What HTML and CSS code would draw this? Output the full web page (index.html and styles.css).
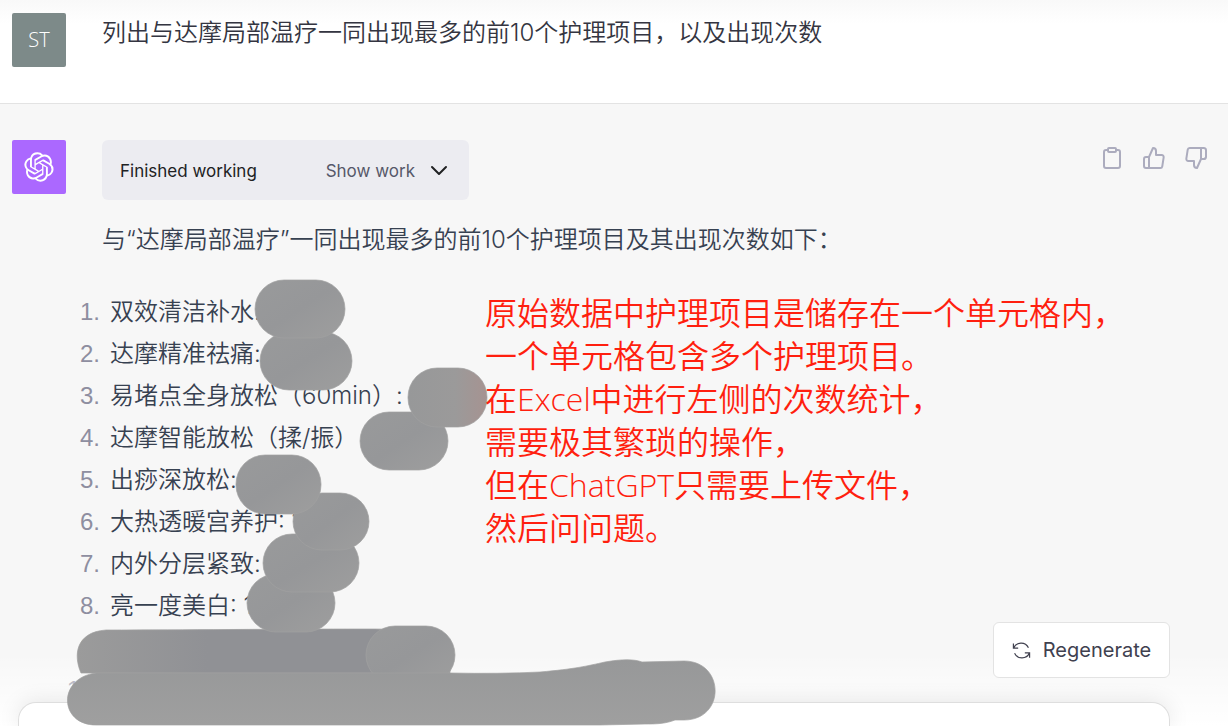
FILE: index.html
```
<!DOCTYPE html>
<html lang="zh-CN">

<head>
    <meta charset="UTF-8">
    <meta name="viewport" content="width=device-width, initial-scale=1.0">
    <title>ChatGPT</title>

    <link rel="stylesheet" href="styles.css">
</head>

<body>
    <main class="chat">
        <section class="turn turn-user">
            <div class="avatar avatar-user">ST</div>
            <p class="text question">列出与达摩局部温疗一同出现最多的前10个护理项目，以及出现次数</p>
        </section>

        <section class="turn turn-bot">
            <div class="avatar avatar-bot">
                <svg class="logo" viewBox="0 0 41 41" fill="currentColor" aria-label="ChatGPT">
                    <path d="M37.532 16.87a9.963 9.963 0 0 0-.856-8.184 10.078 10.078 0 0 0-10.855-4.835A9.964 9.964 0 0 0 18.306.5a10.079 10.079 0 0 0-9.614 6.977 9.967 9.967 0 0 0-6.664 4.834 10.08 10.08 0 0 0 1.24 11.817 9.965 9.965 0 0 0 .856 8.185 10.079 10.079 0 0 0 10.855 4.835 9.965 9.965 0 0 0 7.516 3.35 10.078 10.078 0 0 0 9.617-6.981 9.967 9.967 0 0 0 6.663-4.834 10.079 10.079 0 0 0-1.243-11.813ZM22.498 37.886a7.474 7.474 0 0 1-4.799-1.735c.061-.033.168-.091.237-.134l7.964-4.6a1.294 1.294 0 0 0 .655-1.134V19.054l3.366 1.944a.12.12 0 0 1 .066.092v9.299a7.505 7.505 0 0 1-7.49 7.496ZM6.392 31.006a7.471 7.471 0 0 1-.894-5.023c.06.036.162.099.237.141l7.964 4.6a1.297 1.297 0 0 0 1.308 0l9.724-5.614v3.888a.12.12 0 0 1-.048.103l-8.051 4.649a7.504 7.504 0 0 1-10.24-2.744ZM4.297 13.62A7.469 7.469 0 0 1 8.2 10.333c0 .068-.004.19-.004.274v9.201a1.294 1.294 0 0 0 .654 1.132l9.723 5.614-3.366 1.944a.12.12 0 0 1-.114.01L7.04 23.856a7.504 7.504 0 0 1-2.743-10.237Zm27.658 6.437-9.724-5.615 3.367-1.943a.121.121 0 0 1 .113-.01l8.052 4.648a7.498 7.498 0 0 1-1.158 13.528v-9.476a1.293 1.293 0 0 0-.65-1.132Zm3.35-5.043c-.059-.037-.162-.099-.236-.141l-7.965-4.6a1.298 1.298 0 0 0-1.308 0l-9.723 5.614v-3.888a.12.12 0 0 1 .048-.103l8.05-4.645a7.497 7.497 0 0 1 11.135 7.763Zm-21.063 6.929-3.367-1.944a.12.12 0 0 1-.065-.092v-9.299a7.497 7.497 0 0 1 12.293-5.756 6.94 6.94 0 0 0-.236.134l-7.965 4.6a1.294 1.294 0 0 0-.654 1.132l-.006 11.225Zm1.829-3.943 4.33-2.501 4.332 2.5v5l-4.331 2.5-4.331-2.5V18Z"/>
                </svg>
            </div>

            <div class="answer">
                <div class="answer-top">
                    <div class="work">
                        <span class="work-status">Finished working</span>
                        <button class="work-toggle" type="button">
                            Show work
                            <svg class="chevron" viewBox="0 0 24 24"><path d="M5 8l7 7 7-7"/></svg>
                        </button>
                    </div>
                    <div class="actions">
                        <button class="action" type="button" aria-label="Copy">
                            <svg viewBox="0 0 24 24"><path d="M16 4h2a2 2 0 0 1 2 2v14a2 2 0 0 1-2 2H6a2 2 0 0 1-2-2V6a2 2 0 0 1 2-2h2"/><rect x="8" y="2" width="8" height="4" rx="1"/></svg>
                        </button>
                        <button class="action" type="button" aria-label="Good response">
                            <svg viewBox="0 0 24 24"><path d="M14 9V5a3 3 0 0 0-3-3l-4 9v11h11.280a2 2 0 0 0 2-1.700l1.380-9a2 2 0 0 0-2-2.300zM7 22H4a2 2 0 0 1-2-2v-7a2 2 0 0 1 2-2h3"/></svg>
                        </button>
                        <button class="action" type="button" aria-label="Bad response">
                            <svg viewBox="0 0 24 24"><path d="M10 15v4a3 3 0 0 0 3 3l4-9V2H5.720a2 2 0 0 0-2 1.700l-1.380 9a2 2 0 0 0 2 2.300zm7-13h2.670A2.310 2.310 0 0 1 22 4v7a2.310 2.310 0 0 1-2.330 2H17"/></svg>
                        </button>
                    </div>
                </div>

                <p class="text">与“达摩局部温疗”一同出现最多的前10个护理项目及其出现次数如下：</p>

                <ol class="items">
                    <li>双效清洁补水:</li>
                    <li>达摩精准祛痛:</li>
                    <li>易堵点全身放松（60min）:</li>
                    <li>达摩智能放松（揉/振）</li>
                    <li>出痧深放松:</li>
                    <li>大热透暖宫养护: 1</li>
                    <li>内外分层紧致:</li>
                    <li>亮一度美白: 1</li>
                    <li></li>
                    <li></li>
                </ol>
            </div>
        </section>

        <footer class="bottom">
            <button class="regenerate" type="button">
                <svg class="regenerate-icon" viewBox="0 0 20 20">
                    <path d="M1.500 2.500v5h5M1.700 7.300A8.600 8.600 0 0 1 17.300 7M18.500 17.500v-5h-5M18.300 12.700A8.600 8.600 0 0 1 2.700 13"/>
                </svg>
                Regenerate
            </button>
            <div class="composer">
                <textarea class="prompt" rows="1" aria-label="Message"></textarea>
            </div>
        </footer>

        <!-- marker strokes that hide the numbers -->
        <svg class="marks" viewBox="0 0 740 726" aria-hidden="true">
            <defs>
                <linearGradient id="ink" x1="0" y1="0" x2="1" y2="1">
                    <stop offset="0" stop-color="#999a9b"/>
                    <stop offset="0.5" stop-color="#969799"/>
                    <stop offset="1" stop-color="#9e9e9e"/>
                </linearGradient>
                <linearGradient id="ink-red" x1="0" y1="0" x2="1" y2="0">
                    <stop offset="0" stop-color="#979899"/>
                    <stop offset="0.6" stop-color="#9b9a9a"/>
                    <stop offset="1" stop-color="#a69391"/>
                </linearGradient>
                <linearGradient id="ink-top" x1="0" y1="0" x2="1" y2="0">
                    <stop offset="0" stop-color="#9b9b9b"/>
                    <stop offset="0.35" stop-color="#909195"/>
                    <stop offset="0.8" stop-color="#909195"/>
                    <stop offset="1" stop-color="#999a9a"/>
                </linearGradient>
                <linearGradient id="ink-down" x1="0" y1="0" x2="0" y2="1">
                    <stop offset="0" stop-color="#979899"/>
                    <stop offset="1" stop-color="#9f9f9f"/>
                </linearGradient>
            </defs>
            <path class="mark-top" d="M106 630C190 630 260 629 375 629C430 629 450 640 450 673H81C73 655 76 632 106 630Z"/>
            <rect class="mark" x="366" y="626" width="89" height="58" rx="29"/>
            <path class="mark-long" d="M96 673H450Q500 674 540 672C575 669 587 666 605 662C622 659 634 659 642 662L684 661C725 661 726 720 684 720H675C665 724 655 724 645 724L600 725H96C59 725 57 678 96 673Z"/>
            <rect class="mark" x="247" y="574" width="88" height="58" rx="29"/>
            <rect class="mark" x="263" y="534" width="96" height="58" rx="29"/>
            <rect class="mark" x="293" y="493" width="76" height="57" rx="29"/>
            <rect class="mark" x="236" y="455" width="85" height="59" rx="29"/>
            <rect class="mark" x="360" y="412" width="88" height="58" rx="29"/>
            <rect class="mark-red" x="408" y="368" width="79" height="59" rx="29"/>
            <rect class="mark" x="260" y="332" width="92" height="58" rx="29"/>
            <rect class="mark" x="255" y="280" width="90" height="58" rx="29"/>
        </svg>

        <p class="note">
            原始数据中护理项目是储存在一个单元格内，<br>
            一个单元格包含多个护理项目。<br>
            在Excel中进行左侧的次数统计，<br>
            需要极其繁琐的操作，<br>
            但在ChatGPT只需要上传文件，<br>
            然后问问题。
        </p>
    </main>
</body>

</html>
```

FILE: styles.css
```
* {
    box-sizing: border-box;
}

body {
    margin: 0;
    background: #f7f7f8;
    color: #374151;
    font-family: Inter, "Noto Sans CJK SC", sans-serif;
    font-size: 24px;
    line-height: 42px;
}

button {
    margin: 0;
    padding: 0;
    border: 0;
    background: none;
    color: inherit;
    font: inherit;
}

p {
    margin: 0;
}

.chat {
    position: relative;
    height: 100vh;
    overflow: hidden;
    background: #f7f7f7;
}

.turn {
    display: flex;
    gap: 36px;
    padding: 36px 20px 36px 12px;
}

.turn-user {
    padding-top: 13px;
    border-bottom: 1px solid #e3e3e3;
    background: linear-gradient(#f9f9f9, #fff 24px);
}

.avatar {
    display: flex;
    flex: none;
    align-items: center;
    justify-content: center;
    width: 54px;
    height: 54px;
    border-radius: 2px;
    color: #fff;
    font-size: 20px;
}

.avatar-user {
    background: #7d8a89;
    font-family: "Open Sans", sans-serif;
    font-weight: 300;
}

.avatar-bot {
    background: #ab68ff;
}

.logo {
    width: 30px;
    height: 30px;
}

.text {
    font-weight: 350;
}

.question {
    color: #343541;
    line-height: 40px;
}

.answer {
    flex: 1;
}

.answer-top {
    display: flex;
    justify-content: space-between;
    margin-bottom: 19px;
}

.work {
    display: flex;
    align-items: center;
    justify-content: space-between;
    width: 367px;
    height: 60px;
    padding: 2px 18px 0;
    border-radius: 6px;
    background: #ececf1;
    font-size: 17px;
}

.work-status {
    color: #202123;
}

.work-toggle {
    display: flex;
    align-items: center;
    gap: 12px;
    color: #565869;
}

.chevron {
    width: 24px;
    height: 24px;
    fill: none;
    stroke: #202123;
    stroke-width: 2;
    stroke-linecap: round;
    stroke-linejoin: round;
}

.actions {
    display: flex;
    gap: 18px;
    padding-top: 6px;
}

.action {
    width: 24px;
    height: 24px;
    color: #acacbe;
}

.action svg {
    display: block;
    fill: none;
    stroke: currentColor;
    stroke-width: 2;
    stroke-linecap: round;
    stroke-linejoin: round;
}

.items {
    margin: 30px 0 0 -42px;
    padding: 0;
    list-style: none;
    counter-reset: item;
    font-weight: 350;
}

.items li {
    display: grid;
    grid-template-columns: 40px 1fr;
    gap: 10px;
    counter-increment: item;
}

.items li::before {
    content: counter(item) ".";
    color: #8e8ea0;
    font-family: "Liberation Sans", sans-serif;
    text-align: right;
}

.bottom {
    position: absolute;
    right: 0;
    bottom: 0;
    left: 0;
    display: flex;
    flex-direction: column;
    gap: 24px;
    padding: 0 58px 0 18px;
    background: linear-gradient(rgba(255, 255, 255, 0) 30%, #fff);
}

.regenerate {
    display: flex;
    align-items: center;
    align-self: flex-end;
    justify-content: center;
    gap: 12px;
    width: 177px;
    height: 56px;
    border: 1px solid #e3e3e3;
    border-radius: 6px;
    background: #fff;
    color: #40414f;
    font-size: 20px;
}

.regenerate-icon {
    width: 19px;
    height: 19px;
    fill: none;
    stroke: currentColor;
    stroke-width: 1.3;
}

.composer {
    height: 24px;
    overflow: hidden;
    border: 1px solid #dedede;
    border-bottom: 0;
    border-radius: 18px 18px 0 0;
    background: #fff;
    box-shadow: 0 0 22px rgba(0, 0, 0, 0.1);
}

.prompt {
    display: block;
    width: 100%;
    padding: 0 24px;
    border: 0;
    background: none;
    font: inherit;
    resize: none;
}

.marks {
    position: absolute;
    top: 0;
    left: 0;
    width: 740px;
    height: 726px;
    pointer-events: none;
    stroke: #a0a0a0;
    stroke-width: 0.7;
}

.mark {
    fill: url(#ink);
}

.mark-red {
    fill: url(#ink-red);
}

.mark-top {
    fill: url(#ink-top);
}

.mark-long {
    fill: url(#ink-down);
}

.note {
    position: absolute;
    top: 291px;
    left: 485px;
    color: #ff1f0f;
    font-family: "Open Sans", "Noto Sans CJK SC", sans-serif;
    font-size: 32px;
    font-weight: 350;
    line-height: 43px;
    white-space: nowrap;
}
```
